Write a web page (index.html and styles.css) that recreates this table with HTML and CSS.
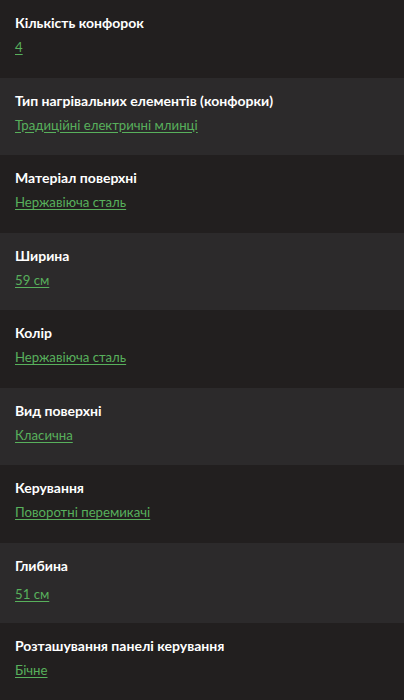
FILE: index.html
```html
<!DOCTYPE html>
<html lang="uk">
<head>
<meta charset="utf-8">
<link rel="stylesheet" href="styles.css">
</head>
<body>
<div class="specs">
  <div class="row row--dark"><div class="label">Кількість конфорок</div><a class="value" href="#">4</a></div>
  <div class="row row--light"><div class="label">Тип нагрівальних елементів (конфорки)</div><a class="value" href="#">Традиційні електричні млинці</a></div>
  <div class="row row--dark"><div class="label">Матеріал поверхні</div><a class="value" href="#">Нержавіюча сталь</a></div>
  <div class="row row--light"><div class="label">Ширина</div><a class="value" href="#">59 см</a></div>
  <div class="row row--dark"><div class="label">Колір</div><a class="value" href="#">Нержавіюча сталь</a></div>
  <div class="row row--light"><div class="label">Вид поверхні</div><a class="value" href="#">Класична</a></div>
  <div class="row row--dark"><div class="label">Керування</div><a class="value" href="#">Поворотні перемикачі</a></div>
  <div class="row row--light row--tall"><div class="label">Глибина</div><a class="value" href="#">51 см</a></div>
  <div class="row row--dark row--last"><div class="label">Розташування панелі керування</div><a class="value" href="#">Бічне</a></div>
</div>
</body>
</html>
```
FILE: styles.css
```css
html, body {
  margin: 0;
  padding: 0;
  background: #221f1f;
}
body {
  font-family: "Lato", "Noto Sans", sans-serif;
  -webkit-font-smoothing: antialiased;
}
.specs {
  display: flex;
  flex-direction: column;
}
.row {
  display: flex;
  flex-direction: column;
  align-items: flex-start;
  gap: 4px;
  padding: 13px 15px 20.5px;
}
.row--dark { background: #221f1f; }
.row--light { background: #2c2a2b; }
.row--tall { gap: 8px; padding-top: 13px; padding-bottom: 19px; }
.row--last { border-bottom: 1px solid #2c2a2b; }
.label {
  color: #ffffff;
  font-size: 14px;
  font-weight: 700;
  line-height: 20px;
}
.value {
  color: #58b05c;
  font-size: 13.2px;
  line-height: 20px;
  text-decoration: underline;
  text-underline-offset: 2px;
}
```
